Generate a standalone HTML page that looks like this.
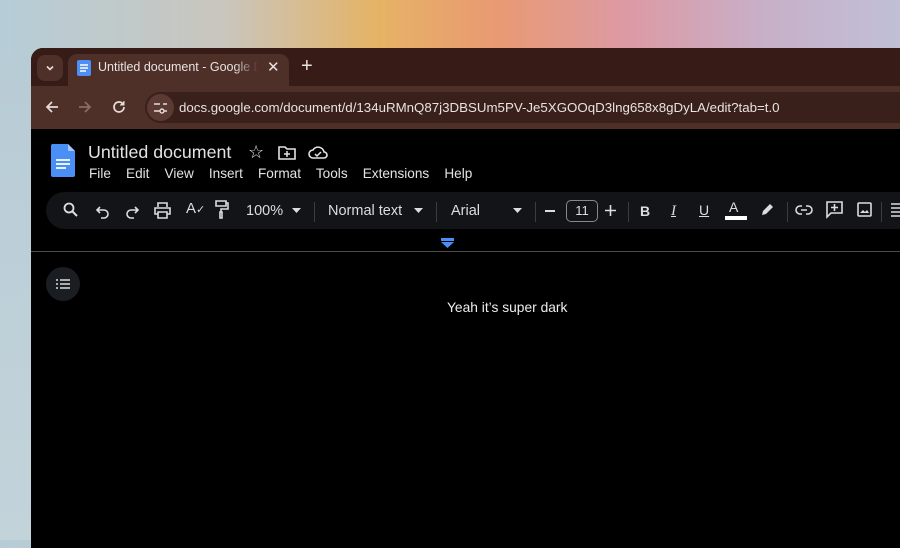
<!DOCTYPE html>
<html><head><meta charset="utf-8"><style>
*{margin:0;padding:0;box-sizing:border-box}
body{width:900px;height:540px;overflow:hidden;position:relative;font-family:"Liberation Sans",Arial,sans-serif;
background:linear-gradient(90deg,#b6cdd8 0%,#c9c6bd 25%,#e5b365 42%,#e99a72 55%,#dc9aa5 70%,#c7b0c8 85%,#c0bfd6 100%);}
.lb{position:absolute;left:0;top:60px;width:31px;height:480px;background:linear-gradient(180deg,#b8ccd6,#c3d3da)}
.win{position:absolute;left:31px;top:48px;width:880px;height:500px;background:#000;border-radius:12px 0 0 0;overflow:hidden}
.tabbar{position:absolute;left:0;top:0;width:100%;height:38px;background:#361b16}
.tabbtn{position:absolute;left:6px;top:7px;width:26px;height:26px;border-radius:8px;background:#4e3029}
.tab{position:absolute;left:37px;top:6px;width:221px;height:34px;background:#4e3029;border-radius:9px 9px 0 0}
.tb{position:absolute;left:0;top:38px;width:100%;height:43px;background:#4e3029}
.omni{position:absolute;left:114px;top:44px;width:800px;height:31px;border-radius:16px;background:#3a201b}
.t{position:absolute;color:#e8e2e0;white-space:nowrap}
.hdr{color:#e3e3e3}
.tool{position:absolute;left:15px;top:144px;width:900px;height:37px;background:#121417;border-radius:19px}
svg{position:absolute}
.tx{top:155px;font-size:14.5px;color:#ddd}
</style></head><body>
<div class="lb"></div>
<div class="win">
 <div class="tabbar"></div>
 <div class="tabbtn"></div>
 <svg style="left:13px;top:14px" width="12" height="12" viewBox="0 0 12 12"><path d="M3 4.5l3 3 3-3" stroke="#e8dcd8" stroke-width="1.6" fill="none"/></svg>
 <div class="tab"></div>
 <svg style="left:46px;top:12px" width="14" height="16" viewBox="0 0 14 16"><rect width="14" height="16" rx="2" fill="#4e8ef7"/><path d="M3 5h8M3 8h8M3 11h6" stroke="#fff" stroke-width="1.4"/></svg>
 <div class="t" style="left:67px;top:12px;font-size:12.5px;width:160px;overflow:hidden;-webkit-mask-image:linear-gradient(90deg,#000 85%,transparent);mask-image:linear-gradient(90deg,#000 85%,transparent)">Untitled document - Google Docs</div>
 <div class="t" style="left:236px;top:10px;font-size:15px">✕</div>
 <div class="t" style="left:270px;top:7px;font-size:20px">+</div>
 <div class="tb"></div>
 <svg style="left:13px;top:51px" width="16" height="16" viewBox="0 0 16 16"><path d="M14 8H3M8 3L3 8l5 5" stroke="#e8dcd8" stroke-width="1.7" fill="none"/></svg>
 <svg style="left:46px;top:51px" width="16" height="16" viewBox="0 0 16 16"><path d="M2 8h11M8 3l5 5-5 5" stroke="#8a6d66" stroke-width="1.7" fill="none"/></svg>
 <svg style="left:80px;top:51px" width="16" height="16" viewBox="0 0 16 16"><path d="M13 8a5 5 0 1 1-1.5-3.6" stroke="#e8dcd8" stroke-width="1.7" fill="none"/><path d="M13 2v4H9" fill="#e8dcd8" stroke="#e8dcd8" stroke-width="1"/></svg>
 <div class="omni"></div>
 <div style="position:absolute;left:116px;top:46px;width:27px;height:27px;border-radius:50%;background:#5a3a33"></div>
 <svg style="left:122px;top:52px" width="15" height="15" viewBox="0 0 15 15"><path d="M1 4h6M1 11h6M10 4h4M11 11h3" stroke="#e8dcd8" stroke-width="1.5"/><circle cx="9" cy="11" r="2" stroke="#e8dcd8" stroke-width="1.4" fill="none"/></svg>
 <div class="t" style="left:148px;top:52px;font-size:13.3px">docs.google.com/document/d/134uRMnQ87j3DBSUm5PV-Je5XGOOqD3lng658x8gDyLA/edit?tab=t.0</div>
 <svg style="left:20px;top:96px" width="24" height="33" viewBox="0 0 24 33"><path d="M0 2a2 2 0 0 1 2-2h15l7 7v24a2 2 0 0 1-2 2H2a2 2 0 0 1-2-2z" fill="#4a8ff5"/><path d="M17 0v7h7z" fill="#a7c6fa"/><path d="M5 16h14M5 20h14M5 24h10" stroke="#fff" stroke-width="1.8"/></svg>
 <div class="t hdr" style="left:57px;top:94px;font-size:17.8px">Untitled document</div>
 <div class="t hdr" style="left:217px;top:94px;font-size:18px">☆</div>
 <svg style="left:247px;top:97px" width="18" height="15" viewBox="0 0 18 15"><path d="M1 2h6l2 2h8v10H1z" stroke="#e3e3e3" stroke-width="1.6" fill="none"/><path d="M9 6v6M6 9h6" stroke="#e3e3e3" stroke-width="1.5"/></svg>
 <svg style="left:277px;top:97px" width="20" height="15" viewBox="0 0 20 15"><path d="M5 13a4 4 0 0 1 0-8 6 6 0 0 1 11 2 3 3 0 0 1 0 6z" stroke="#e3e3e3" stroke-width="1.6" fill="none"/><path d="M7 9l2 2 4-4" stroke="#e3e3e3" stroke-width="1.5" fill="none"/></svg>
 <div class="t hdr" style="left:58px;top:118px;font-size:13.6px">File&nbsp;&nbsp;&nbsp; Edit&nbsp;&nbsp;&nbsp; View&nbsp;&nbsp;&nbsp; Insert&nbsp;&nbsp;&nbsp; Format&nbsp;&nbsp;&nbsp; Tools&nbsp;&nbsp;&nbsp; Extensions&nbsp;&nbsp;&nbsp; Help</div>
 <div class="tool"></div>
 <svg style="left:32px;top:154px" width="16" height="16" viewBox="0 0 16 16"><circle cx="6" cy="6" r="4.5" stroke="#ddd" stroke-width="1.8" fill="none"/><path d="M9.5 9.5L14 14" stroke="#ddd" stroke-width="2"/></svg>
 <svg style="left:64px;top:155px" width="16" height="16" viewBox="0 0 16 16"><path d="M5 4L2 7l3 3M2 7h7a4 4 0 0 1 0 8H6" stroke="#ddd" stroke-width="1.6" fill="none"/></svg>
 <svg style="left:93px;top:155px" width="16" height="16" viewBox="0 0 16 16"><path d="M11 4l3 3-3 3M14 7H7a4 4 0 0 0 0 8h3" stroke="#ddd" stroke-width="1.6" fill="none"/></svg>
 <svg style="left:123px;top:154px" width="17" height="17" viewBox="0 0 17 17"><path d="M4 5V1h9v4M4 12H1V6h15v6h-3M4 10h9v6H4z" stroke="#ddd" stroke-width="1.6" fill="none"/></svg>
 <div class="t" style="left:155px;top:152px;font-size:15px;color:#ddd">A<span style="font-size:11px">✓</span></div>
 <svg style="left:184px;top:152px" width="14" height="20" viewBox="0 0 14 20"><path d="M1 1h10v5H1zM11 3h2v6H6v3M5 12h2v6H5z" stroke="#ddd" stroke-width="1.6" fill="none"/></svg>
 <div class="t tx" style="left:215px">100%</div>
 <svg style="left:261px;top:160px" width="9" height="5" viewBox="0 0 9 5"><path d="M0 0h9L4.5 5z" fill="#ddd"/></svg>
 <div style="position:absolute;left:283px;top:154px;width:1px;height:20px;background:#3a3d42"></div>
 <div class="t tx" style="left:297px">Normal text</div>
 <svg style="left:383px;top:160px" width="9" height="5" viewBox="0 0 9 5"><path d="M0 0h9L4.5 5z" fill="#ddd"/></svg>
 <div style="position:absolute;left:405px;top:154px;width:1px;height:20px;background:#3a3d42"></div>
 <div class="t tx" style="left:420px">Arial</div>
 <svg style="left:482px;top:160px" width="9" height="5" viewBox="0 0 9 5"><path d="M0 0h9L4.5 5z" fill="#ddd"/></svg>
 <div style="position:absolute;left:504px;top:154px;width:1px;height:20px;background:#3a3d42"></div>
 <div style="position:absolute;left:514px;top:162px;width:10px;height:1.6px;background:#ddd"></div>
 <div style="position:absolute;left:535px;top:152px;width:32px;height:22px;border:1px solid #888;border-radius:5px;color:#ddd;font-size:13px;text-align:center;line-height:20px">11</div>
 <svg style="left:574px;top:157px" width="11" height="11" viewBox="0 0 11 11"><path d="M5.5 0v11M0 5.5h11" stroke="#ddd" stroke-width="1.6"/></svg>
 <div style="position:absolute;left:597px;top:154px;width:1px;height:20px;background:#3a3d42"></div>
 <div class="t" style="left:609px;top:155px;font-size:14px;font-weight:bold;color:#ddd">B</div>
 <div class="t" style="left:640px;top:155px;font-size:15px;font-style:italic;font-family:'Liberation Serif',serif;color:#ddd"><u>I</u></div>
 <div class="t" style="left:668px;top:154px;font-size:14px;color:#ddd"><u>U</u></div>
 <div class="t" style="left:698px;top:151px;font-size:14px;color:#ddd">A</div>
 <div style="position:absolute;left:694px;top:168px;width:22px;height:4px;background:#fff"></div>
 <svg style="left:729px;top:154px" width="15" height="15" viewBox="0 0 15 15"><path d="M2 13l1-4 7-7 3 3-7 7z" fill="#ddd"/></svg>
 <div style="position:absolute;left:756px;top:154px;width:1px;height:20px;background:#3a3d42"></div>
 <svg style="left:764px;top:156px" width="18" height="12" viewBox="0 0 18 12"><path d="M7 2H5a4 4 0 0 0 0 8h2M11 2h2a4 4 0 0 1 0 8h-2M6 6h6" stroke="#ddd" stroke-width="1.6" fill="none"/></svg>
 <svg style="left:795px;top:153px" width="17" height="18" viewBox="0 0 17 18"><path d="M1 1h15v11H5l-4 4z" stroke="#ddd" stroke-width="1.6" fill="none"/><path d="M8.5 3v7M5 6.5h7" stroke="#ddd" stroke-width="1.6"/></svg>
 <svg style="left:826px;top:154px" width="15" height="15" viewBox="0 0 15 15"><rect x="1" y="1" width="13" height="13" rx="1" stroke="#ddd" stroke-width="1.6" fill="none"/><path d="M3 11l3-3 2 2 2-2 2 3z" fill="#ddd"/></svg>
 <div style="position:absolute;left:850px;top:154px;width:1px;height:20px;background:#3a3d42"></div>
 <svg style="left:860px;top:155px" width="10" height="15" viewBox="0 0 10 15"><path d="M0 1h10M0 5h10M0 9h10M0 13h10" stroke="#ddd" stroke-width="1.6"/></svg>
 <svg style="left:410px;top:190px" width="13" height="11" viewBox="0 0 13 11"><rect width="13" height="3" fill="#4a8ff5"/><path d="M0 4h13l-6.5 6z" fill="#4a8ff5"/></svg>
 <div style="position:absolute;left:0;top:203px;width:100%;height:1px;background:#4a4a4a"></div>
 <div style="position:absolute;left:15px;top:219px;width:34px;height:34px;border-radius:50%;background:#1a1d21"></div>
 <svg style="left:25px;top:231px" width="14" height="10" viewBox="0 0 14 10"><path d="M0 1h2M4 1h10M0 5h2M4 5h10M0 9h2M4 9h10" stroke="#ddd" stroke-width="1.6"/></svg>
 <div class="t" style="left:416px;top:252px;font-size:13.8px;color:#eee">Yeah it’s super dark</div>
</div>
</body></html>
